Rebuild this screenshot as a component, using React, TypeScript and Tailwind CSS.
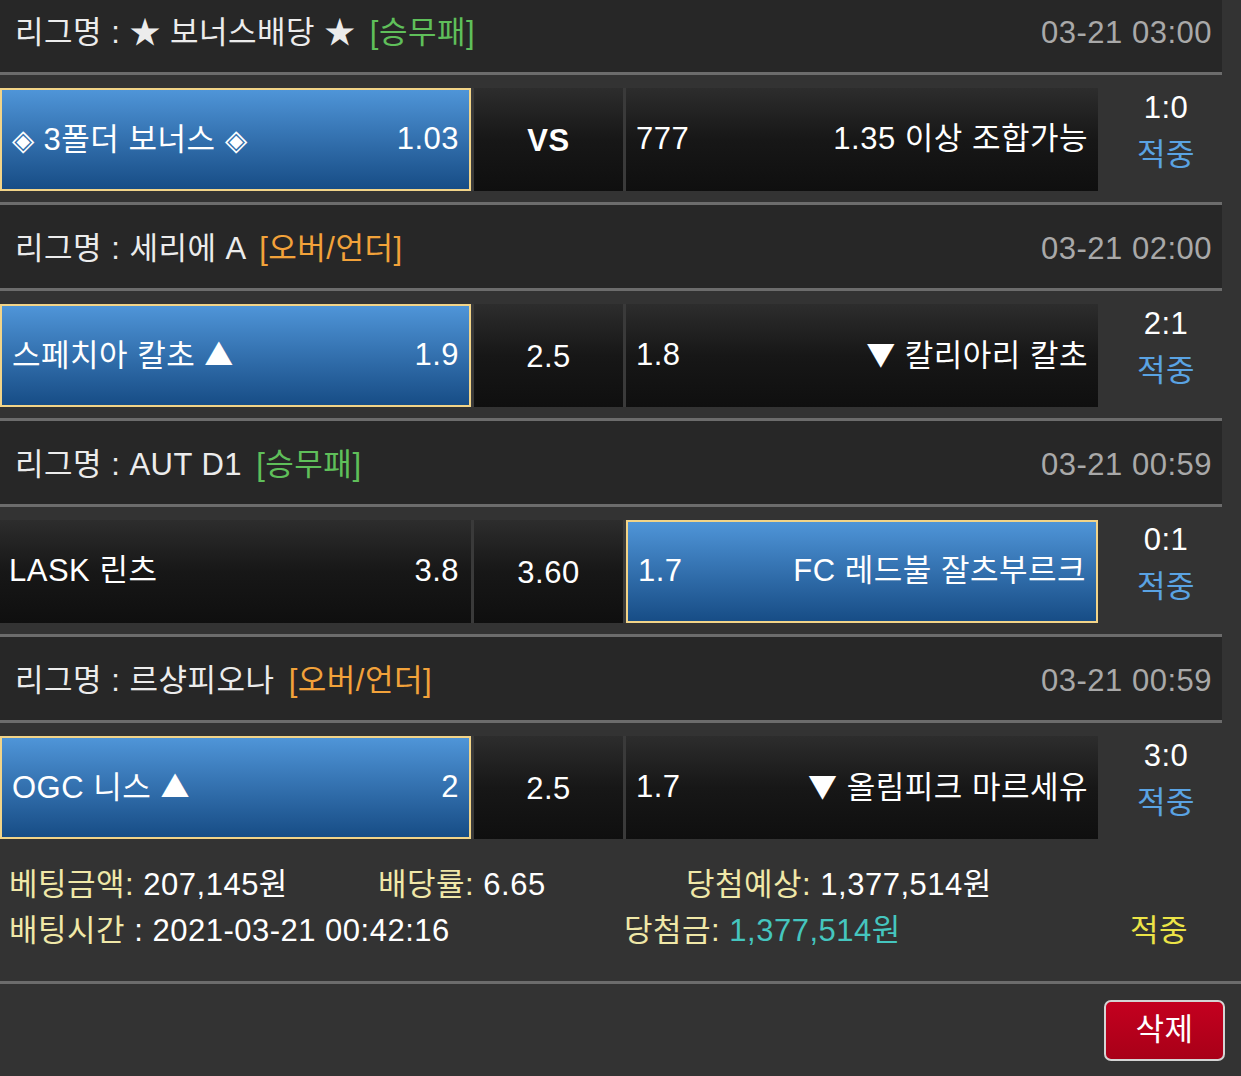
import React from 'react';

type Cell = { text: string; odds: string; picked?: boolean };

type Game = {
    league: string;
    kind: 'win' | 'ou';
    time: string;
    home: Cell;
    mid: string;
    midBold?: boolean;
    away: Cell;
    score: string;
};

const games: Game[] = [
    {
        league: '★ 보너스배당 ★',
        kind: 'win',
        time: '03-21 03:00',
        home: { text: '◈ 3폴더 보너스 ◈', odds: '1.03', picked: true },
        mid: 'VS',
        midBold: true,
        away: { text: '1.35 이상 조합가능', odds: '777' },
        score: '1:0',
    },
    {
        league: '세리에 A',
        kind: 'ou',
        time: '03-21 02:00',
        home: { text: '스페치아 칼초 ▲', odds: '1.9', picked: true },
        mid: '2.5',
        away: { text: '▼ 칼리아리 칼초', odds: '1.8' },
        score: '2:1',
    },
    {
        league: 'AUT D1',
        kind: 'win',
        time: '03-21 00:59',
        home: { text: 'LASK 린츠', odds: '3.8' },
        mid: '3.60',
        away: { text: 'FC 레드불 잘츠부르크', odds: '1.7', picked: true },
        score: '0:1',
    },
    {
        league: '르샹피오나',
        kind: 'ou',
        time: '03-21 00:59',
        home: { text: 'OGC 니스 ▲', odds: '2', picked: true },
        mid: '2.5',
        away: { text: '▼ 올림피크 마르세유', odds: '1.7' },
        score: '3:0',
    },
];

const font = { fontFamily: '"Liberation Sans", "Noto Sans CJK KR", sans-serif' };

// symbols come out bigger in the CJK font, like the original
function withSymbols(text: string) {
    return text.split(/([▲▼◈])/).map((part, i) =>
        /[▲▼◈]/.test(part) ? (
            <span key={i} className="font-['Noto_Sans_CJK_KR'] text-[29px]">{part}</span>
        ) : (
            <React.Fragment key={i}>{part}</React.Fragment>
        )
    );
}

function cellClass(picked?: boolean) {
    return picked
        ? 'bg-linear-to-b from-[#4f95d8] to-[#174d86] border-2 border-[#f2d488]'
        : 'bg-linear-to-b from-[#2d2d2d] via-[#171717] to-[#0f0f0f]';
}

function Header({ game, first }: { game: Game; first?: boolean }) {
    return (
        <div className={`h-[83px] bg-[#272727] flex items-center justify-between pl-[15px] pr-[10px] pt-[5px] ${first ? '-mt-[11px]' : ''}`}>
            <div className="whitespace-pre text-[#ececec]">
                리그명 : {game.league}{' '}
                {game.kind === 'win' ? (
                    <span className="ml-[5px] text-[#5fbf5a]">[승무패]</span>
                ) : (
                    <span className="ml-[5px] text-[#f2a23a]">[오버/언더]</span>
                )}
            </div>
            <div className="text-[#a9a9a9]">{game.time}</div>
        </div>
    );
}

function Row({ game }: { game: Game }) {
    const h = game.home;
    const a = game.away;
    return (
        <div className="h-[127px] flex pt-[13px] pb-[11px]">
            <div className="flex gap-[3px] w-[1098px] bg-[#3a3a3a]">
                <div className={`w-[471px] flex items-center justify-between ${h.picked ? 'pl-[10px] pr-[10px]' : 'pl-[9px] pr-[12px]'} ${cellClass(h.picked)}`}>
                    <span className="text-white">{withSymbols(h.text)}</span>
                    <span className="text-white">{h.odds}</span>
                </div>
                <div className={`w-[149px] flex items-center justify-center pt-[3px] ${cellClass()}`}>
                    <span className={`text-white ${game.midBold ? 'font-bold' : ''}`}>{game.mid}</span>
                </div>
                <div className={`flex-1 flex items-center justify-between pl-[10px] pr-[10px] ${cellClass(a.picked)}`}>
                    <span className="text-white">{a.odds}</span>
                    <span className="text-white">{withSymbols(a.text)}</span>
                </div>
            </div>
            <div className="flex-1 flex flex-col items-center justify-center gap-[1px] -mt-[16px] pl-[12px]">
                <span className="text-white leading-[46px]">{game.score}</span>
                <span className="text-[#5aa3e3] leading-[46px]">적중</span>
            </div>
        </div>
    );
}

function Line() {
    return <div className="h-[3px] bg-[#6c6c6c]" />;
}

export default function App() {
    return (
        <div className="w-[1241px] h-[1076px] overflow-hidden bg-[#333333] text-[31px] tracking-[0.5px]" style={font}>
            <div className="w-[1222px]">
                {games.map((g, i) => (
                    <div key={i}>
                        {i > 0 && <Line />}
                        <Header game={g} first={i === 0} />
                        <Line />
                        <Row game={g} />
                    </div>
                ))}
            </div>
            <div className="h-[131px] px-[9px] pt-[12px] text-white">
                <div className="flex h-[46px] items-center">
                    <div className="w-[369px]">
                        <span className="text-[#f0e8a8]">베팅금액:</span> 207,145원
                    </div>
                    <div className="w-[308px]">
                        <span className="text-[#f0e8a8]">배당률:</span> 6.65
                    </div>
                    <div>
                        <span className="text-[#f0e8a8]">당첨예상:</span> 1,377,514원
                    </div>
                </div>
                <div className="flex h-[46px] items-center">
                    <div className="w-[615px]">
                        <span className="text-[#f0e8a8]">배팅시간</span> : 2021-03-21 00:42:16
                    </div>
                    <div className="w-[506px]">
                        <span className="text-[#f0e8a8]">당첨금:</span>{' '}
                        <span className="text-[#45c6bf]">1,377,514원</span>
                    </div>
                    <div className="text-[#ece447]">적중</div>
                </div>
            </div>
            <Line />
            <div className="h-[92px] flex justify-end items-start pt-[16px] pr-[16px]">
                <button className="w-[121px] h-[61px] rounded-[7px] border-2 border-[#d4d4d4] bg-linear-to-b from-[#c4001f] to-[#a80018] text-white flex items-center justify-center">
                    삭제
                </button>
            </div>
        </div>
    );
}
